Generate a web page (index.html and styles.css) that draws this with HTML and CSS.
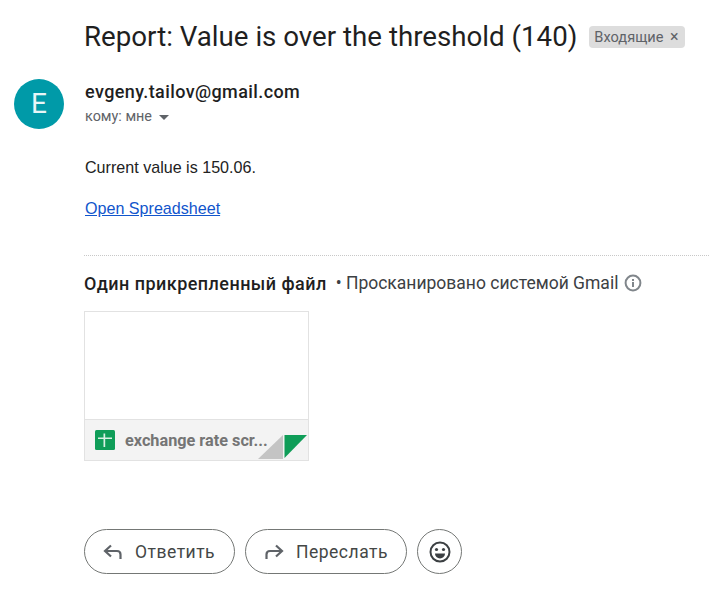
FILE: index.html
```html
<!DOCTYPE html>
<html lang="ru">
<head>
<meta charset="utf-8">
<title>Report</title>
<link rel="stylesheet" href="styles.css">
</head>
<body>
<main class="mail">
  <header class="subject">
    <h1 class="subject-title">Report: Value is over the threshold (140)</h1>
    <span class="label">Входящие <span class="label-x">×</span></span>
  </header>
  <section class="sender">
    <div class="avatar">E</div>
    <div class="sender-info">
      <div class="sender-name">evgeny.tailov@gmail.com</div>
      <div class="recipient">кому: мне <svg class="caret" width="10" height="5" viewBox="0 0 10 5"><path d="M0 0h10L5 5z" fill="#5f6368"/></svg></div>
    </div>
  </section>
  <section class="content">
    <p class="para">Current value is 150.06.</p>
    <p class="para"><a class="link" href="#">Open Spreadsheet</a></p>
  </section>
  <hr class="divider">
  <section class="attach-head">
    <strong class="attach-count">Один прикрепленный файл</strong>
    <span class="attach-scan">• Просканировано системой Gmail</span>
    <svg class="info" width="18" height="18" viewBox="0 0 18 18"><circle cx="9" cy="9" r="7.4" fill="none" stroke="#80868b" stroke-width="2"/><rect x="8" y="8" width="2" height="5" fill="#80868b"/><rect x="8" y="5" width="2" height="2" fill="#80868b"/></svg>
  </section>
  <section class="card">
    <div class="card-preview"></div>
    <div class="card-foot">
      <svg class="sheet" width="20" height="20" viewBox="0 0 20 20"><rect width="20" height="20" rx="1.500" fill="#0f9d58"/><path d="M3 7.500h5.500V3.500h1.700v4H17v1.600h-6.800V17H8.500V9.100H3z" fill="#d9f0e3"/></svg>
      <span class="card-name">exchange rate scr...</span>
    </div>
    <svg class="fold" width="50" height="25" viewBox="0 0 50 25"><path d="M0 24 25 0v24z" fill="#c4c4c4"/><path d="M26.500 0H49L26.500 23z" fill="#0f9d58"/></svg>
  </section>
  <section class="actions">
    <button class="btn"><svg class="btn-icon" width="20" height="16" viewBox="0 0 20 16"><path d="M8 1.500 2 7l6 5.500M2.500 7H14c2.200 0 3.500 1.500 3.500 3.500V15" fill="none" stroke="#5f6368" stroke-width="2.200"/></svg>Ответить</button>
    <button class="btn btn-fwd"><svg class="btn-icon" width="20" height="16" viewBox="0 0 20 16"><path d="M12 1.500 18 7l-6 5.500M17.500 7H6C3.800 7 2.500 8.500 2.500 10.500V15" fill="none" stroke="#5f6368" stroke-width="2.200"/></svg>Переслать</button>
    <button class="btn-round"><svg width="24" height="24" viewBox="0 0 24 24"><circle cx="12" cy="12" r="9.500" fill="none" stroke="#3c4043" stroke-width="2"/><circle cx="8.500" cy="9.500" r="1.600" fill="#3c4043"/><circle cx="15.500" cy="9.500" r="1.600" fill="#3c4043"/><path d="M7 13.500h10a5 5 0 0 1-10 0z" fill="#3c4043"/></svg></button>
  </section>
</main>
</body>
</html>
```
FILE: styles.css
```css
html, body { margin: 0; padding: 0; background: #fff; }
body { font-family: Roboto, "Noto Sans", sans-serif; color: #202124; width: 709px; height: 614px; overflow: hidden; }
.mail { padding: 19px 0 0 84px; display: flex; flex-direction: column; align-items: flex-start; }
.subject { display: flex; align-items: center; height: 36px; gap: 12px; }
.subject-title { margin: 0; font-size: 27.7px; font-weight: 400; line-height: 36px; color: #1f1f1f; white-space: nowrap; }
.label { background: #dddddd; color: #5f6368; font-size: 14.6px; line-height: 22px; height: 22px; padding: 0 6px 0 5px; border-radius: 4px; white-space: nowrap; }
.label-x { margin-left: 3px; font-size: 16px; }
.sender { display: flex; margin-left: -70px; margin-top: 24px; height: 50px; gap: 21px; }
.avatar { width: 50px; height: 50px; border-radius: 50%; background: #009aa8; color: #e8f6f7; font-size: 28px; line-height: 50px; text-align: center; }
.sender-name { font-size: 18px; font-weight: 500; letter-spacing: .4px; line-height: 24px; color: #1f1f1f; margin-top: 1px; }
.recipient { font-size: 14.4px; line-height: 20px; color: #5f6368; margin-top: 3px; display: flex; align-items: center; gap: 7px; }
.content { margin-top: 29px; margin-left: 1px; font-family: "Liberation Sans", Arial, sans-serif; font-size: 16.100px; color: #222; }
.para { margin: 0 0 22px; line-height: 19px; }
.link { color: #1155cc; }
.divider { width: 625px; margin: 15px 0 0; border: 0; border-top: 1px dotted #c8c8c8; }
.attach-head { display: flex; align-items: center; margin-top: 15px; height: 24px; font-size: 17.500px; }
.attach-count { font-weight: 500; font-size: 18px; letter-spacing: .45px; color: #1f1f1f; }
.attach-scan { margin-left: 9px; color: #3c4043; }
.info { margin-left: 6px; }
.card { position: relative; width: 225px; height: 150px; margin-top: 16px; box-sizing: border-box; border: 1px solid #e2e2e2; display: flex; flex-direction: column; }
.card-preview { height: 107px; background: #fff; }
.card-foot { flex: 1; background: #f3f3f3; border-top: 1px solid #e2e2e2; display: flex; align-items: center; padding-left: 10px; gap: 10px; }
.card-name { font-size: 16.250px; font-weight: 700; color: #757575; white-space: nowrap; }
.fold { position: absolute; right: 0; bottom: 0; }
.actions { display: flex; gap: 10px; margin-top: 68px; }
.btn, .btn-round { height: 45px; box-sizing: border-box; border: 1px solid #747775; background: #fff; border-radius: 23px; font-family: Roboto, sans-serif; font-size: 17.500px; color: #444746; display: flex; align-items: center; padding: 0; letter-spacing: .5px; }
.btn { width: 151px; padding-left: 18px; }
.btn-fwd { width: 162px; }
.btn-icon { margin-right: 12px; }
.btn-round { width: 45px; justify-content: center; }
```
